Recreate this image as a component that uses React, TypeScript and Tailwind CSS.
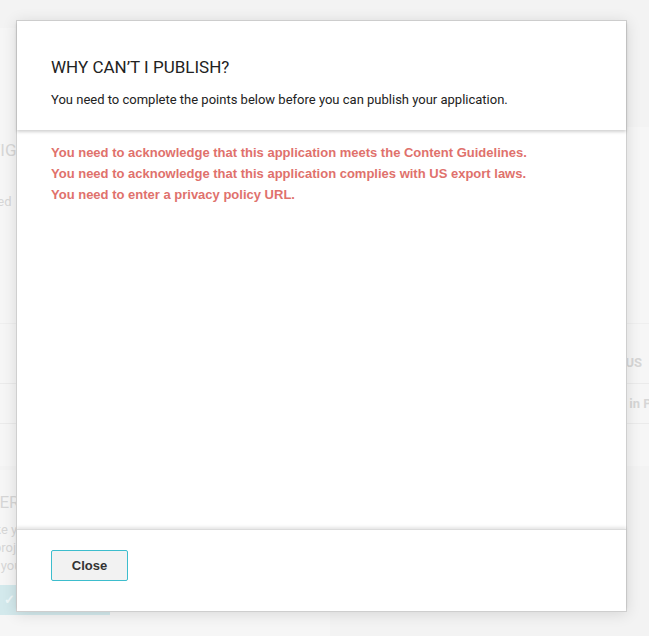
import React from "react";

const errors = [
  "You need to acknowledge that this application meets the Content Guidelines.",
  "You need to acknowledge that this application complies with US export laws.",
  "You need to enter a privacy policy URL.",
];

function Backdrop() {
  // faded page content sitting behind the dialog
  return (
    <div className="flex flex-col text-[#d6d6d6]">
      <div className="flex pt-[28px]">
        <div className="h-[438px] w-[330px] bg-[#f6f6f6]">
          <div className="h-[296px] border-b border-[#efefef]">
            <div className="-ml-[44px] pt-[112px] text-[17px] leading-5">CONFIG</div>
            <div className="-ml-[50px] pt-[32px] text-[13px]">configured</div>
          </div>
          <div className="h-[60px] border-b border-[#ebebeb]" />
          <div className="h-[40px] border-b border-[#ebebeb]" />
        </div>
        <div className="mt-[99px] h-[339px] flex-1 overflow-hidden bg-[#f6f6f6]">
          <div className="h-[197px] border-b border-[#efefef]" />
          <div className="h-[60px] whitespace-nowrap border-b border-[#ebebeb] pl-[264px] pt-[30px] text-[13px] font-bold leading-[18px]">
            STATUS
          </div>
          <div className="flex h-[40px] items-center whitespace-nowrap border-b border-[#ebebeb] pl-[272px] text-[13px] font-bold">
            Live in Production
          </div>
        </div>
      </div>
      <div className="mt-[4px] h-[200px] w-[330px] bg-[#f6f6f6]">
        <div className="-ml-[46px] pt-[22px] text-[17px] leading-5">DELIVERY</div>
        <div className="-ml-[24px] pt-[9px] text-[13px] leading-[18px]">
          <div>Make your</div>
          <div>All projects</div>
          <div>and your</div>
        </div>
        <div className="mt-[10px] flex h-[30px] w-[110px] items-center bg-[#d3e9ec] pl-[4px] text-[13px] font-bold text-[#eef7f8]">
          ✓ cl
        </div>
      </div>
    </div>
  );
}

export default function App() {
  return (
    <div
      className="relative h-[636px] w-full overflow-hidden bg-[#f3f3f3]"
      style={{ fontFamily: "Roboto, 'Liberation Sans', sans-serif" }}
    >
      <Backdrop />

      <div className="absolute left-[16px] top-[20px] flex h-[592px] w-[611px] flex-col border border-[#cfcfcf] bg-white shadow-[0_2px_14px_rgba(0,0,0,0.12)]">
        <div className="relative z-10 px-[34px] pb-[21px] pt-[36px] shadow-[0_2px_3px_rgba(0,0,0,0.18)]">
          <h2 className="text-[17px] font-normal uppercase leading-5 text-[#222]">
            Why can&rsquo;t I publish?
          </h2>
          <p className="mt-[14px] text-[13px] leading-[18px] text-[#222]">
            You need to complete the points below before you can publish your application.
          </p>
        </div>

        <div className="flex-1 px-[34px] pt-[12px] font-['Liberation_Sans',Arial,sans-serif]">
          {errors.map((msg) => (
            <div key={msg} className="text-[13px] font-bold leading-[21px] text-[#e0716c]">
              {msg}
            </div>
          ))}
        </div>

        <div className="border-t border-[#dcdcdc] px-[34px] pb-[30px] pt-[20px] shadow-[0_-2px_3px_rgba(0,0,0,0.1)]">
          <button className="h-[31px] w-[77px] rounded-[2px] border border-[#3dbdcd] bg-[#f2f2f2] font-['Liberation_Sans',Arial,sans-serif] text-[13px] font-bold text-[#333]">
            Close
          </button>
        </div>
      </div>
    </div>
  );
}
